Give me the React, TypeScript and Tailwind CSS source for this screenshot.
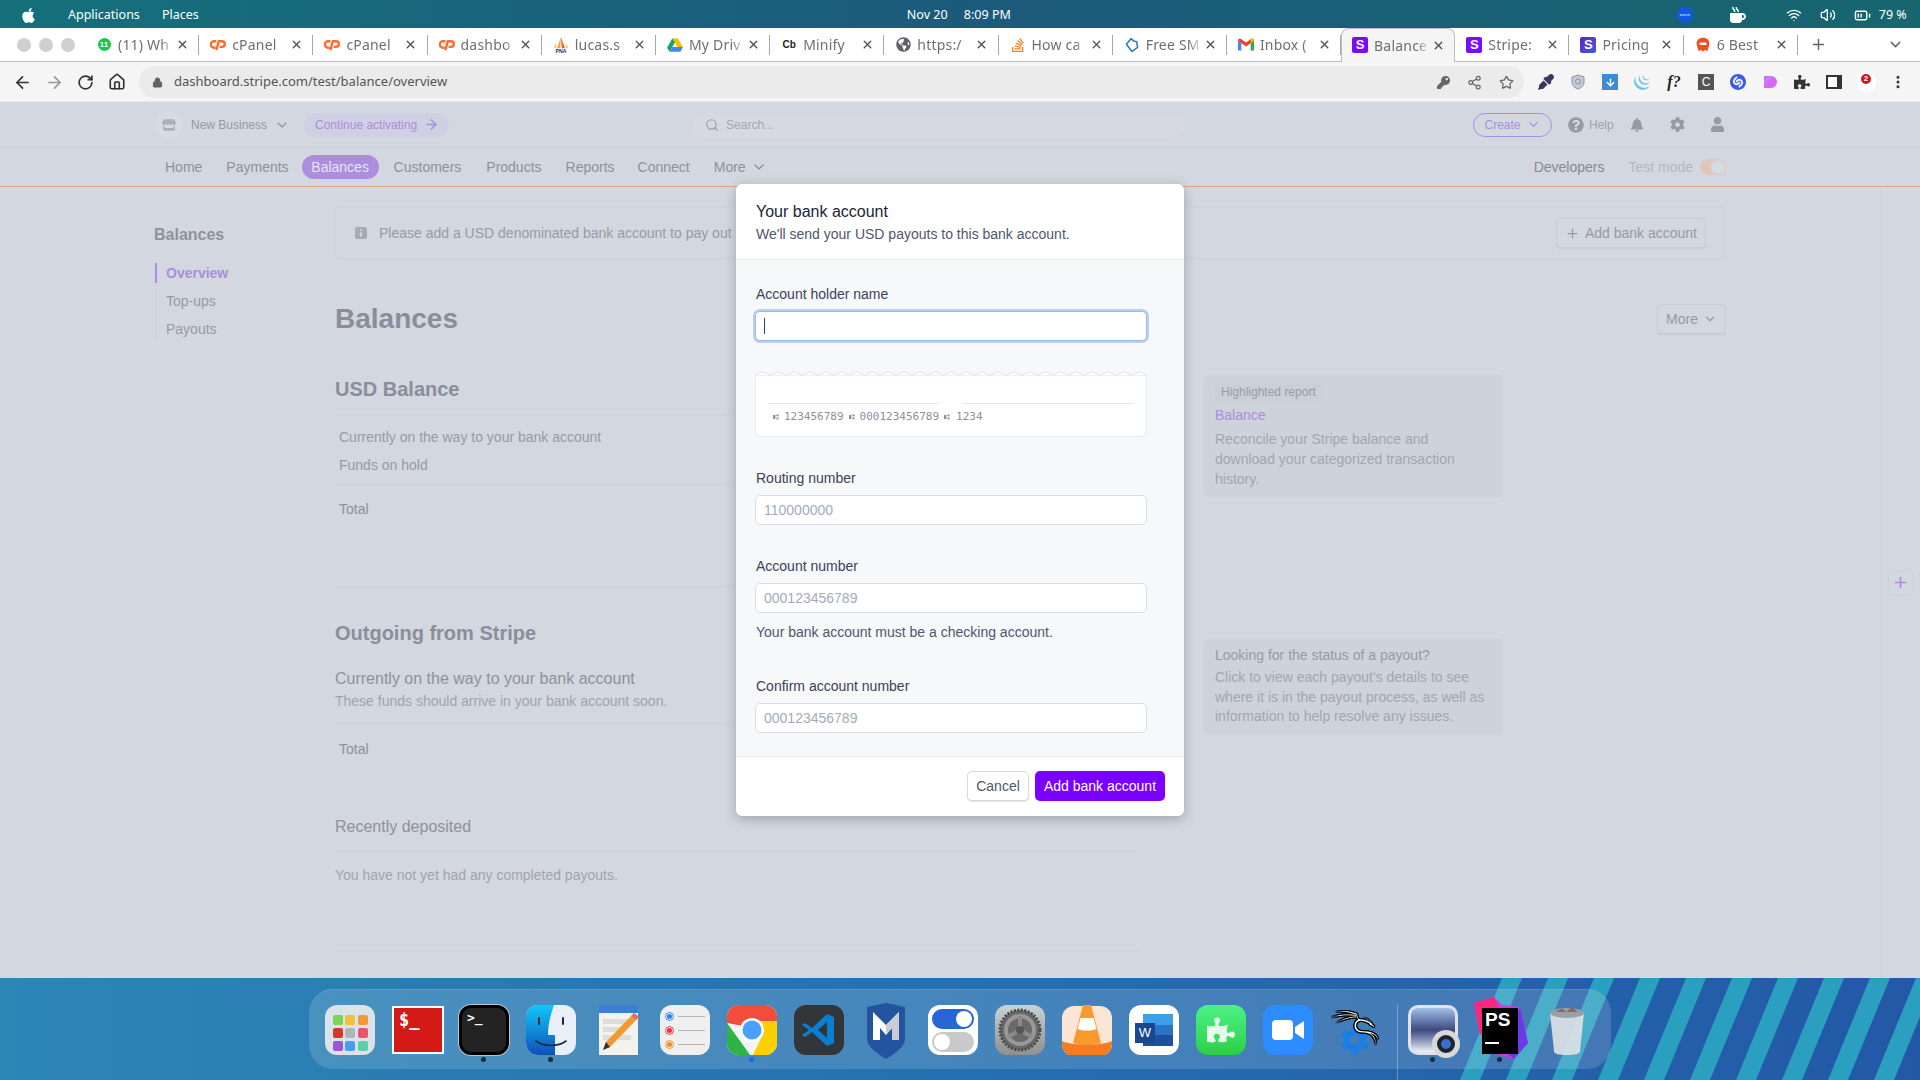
import type { ReactNode } from 'react'
import {
  ArrowLeft,
  ArrowRight,
  BatteryMedium,
  ChevronDown,
  Home,
  Lock,
  MoreVertical,
  Plus,
  RotateCw,
  Search,
  Share2,
  Star,
  Volume2,
  Wifi,
  X,
} from 'lucide-react'
import {
  FaApple,
  FaBell,
  FaCog,
  FaEyeDropper,
  FaGlobeAmericas,
  FaKey,
  FaMugHot,
  FaPuzzlePiece,
  FaQuestionCircle,
  FaStackOverflow,
  FaStore,
  FaUser,
} from 'react-icons/fa'
import { SiJquery, SiKalilinux, SiShazam } from 'react-icons/si'

function StripeFav({ gradient }: { gradient?: boolean }) {
  return (
    <span
      className={`flex h-4 w-4 items-center justify-center rounded-[2px] font-['Liberation_Sans',sans-serif] text-[13px] font-bold text-white ${
        gradient ? 'bg-gradient-to-br from-[#5b1fc4] to-[#3a5be0]' : 'bg-[#7a0bff]'
      }`}
    >
      S
    </span>
  )
}

function CpanelFav() {
  return (
    <svg viewBox="0 0 20 14" className="h-[13px] w-4" fill="none" stroke="#ff6c2c" strokeWidth="3">
      <path d="M8 3H5a4 4 0 0 0 0 8h2" />
      <path d="M8 14 11 3h4a3.5 3.5 0 0 1 0 7h-3" />
    </svg>
  )
}

function DriveFav() {
  return (
    <svg viewBox="0 0 24 22" className="h-4 w-4">
      <path d="M8 1h8l8 13h-8z" fill="#fbbc04" />
      <path d="M8 1 0 15l4 6 8-14z" fill="#1ea362" />
      <path d="M4 21h16l4-7H8z" fill="#4285f4" />
    </svg>
  )
}

function GmailFav() {
  return (
    <svg viewBox="0 0 24 18" className="h-[13px] w-4">
      <path d="M0 3v15h5V7z" fill="#4285f4" />
      <path d="M24 3v15h-5V7z" fill="#34a853" />
      <path d="M0 3c0-3 3-4 5-2l7 5 7-5c2-2 5-1 5 2l-5 4-7 5-7-5z" fill="#ea4335" />
      <path d="M19 1c2-2 5-1 5 2l-5 4z" fill="#fbbc04" />
    </svg>
  )
}

function PnaFav() {
  return (
    <svg viewBox="0 0 20 20" className="h-4 w-4">
      <path d="M10 0 5 14h4z" fill="#f2a33a" />
      <path d="M10 0l1 14h4z" fill="#d9691e" />
      <path d="M4 7 1 14h3z" fill="#f7c55a" />
      <path d="M16 7l3 7h-3z" fill="#f7c55a" />
      <text x="10" y="20" textAnchor="middle" fontSize="6.5" fontWeight="700" fill="#1d2f6f" fontFamily="Liberation Sans">
        PNA
      </text>
    </svg>
  )
}

function BlobFav() {
  return (
    <svg viewBox="0 0 20 20" className="h-4 w-4" fill="none" stroke="#2f7fb8" strokeWidth="2">
      <path d="M9 2 3 9l7 9 7-5-1-7-4-1z" strokeLinejoin="round" />
    </svg>
  )
}

function RocketFav() {
  return (
    <svg viewBox="0 0 20 20" className="h-4 w-4">
      <path d="M10 1c5 0 8 3 8 7 0 2-1 3-1 5l-2 5-2-2-3 2-3-2-2 2-2-5c0-2-1-3-1-5 0-4 3-7 8-7z" fill="#f0501e" />
      <rect x="5.5" y="7" width="9" height="3" rx="1.5" fill="#fff" />
    </svg>
  )
}

const tabs: { title: string; icon: ReactNode; active?: boolean }[] = [
  {
    title: '(11) Wh',
    icon: (
      <span className="flex h-[13px] w-[13px] items-center justify-center rounded-full bg-[#12c94e] font-['Liberation_Sans',sans-serif] text-[8px] font-bold text-white">
        11
      </span>
    ),
  },
  { title: 'cPanel', icon: <CpanelFav /> },
  { title: 'cPanel', icon: <CpanelFav /> },
  { title: 'dashbo', icon: <CpanelFav /> },
  { title: 'lucas.s', icon: <PnaFav /> },
  { title: 'My Driv', icon: <DriveFav /> },
  {
    title: 'Minify',
    icon: <span className="font-['Liberation_Sans',sans-serif] text-[10px] font-bold text-[#222]">Cb</span>,
  },
  { title: 'https:/', icon: <FaGlobeAmericas className="h-[15px] w-[15px] text-[#5f6368]" /> },
  { title: 'How ca', icon: <FaStackOverflow className="h-4 w-4 text-[#f48024]" /> },
  { title: 'Free SM', icon: <BlobFav /> },
  { title: 'Inbox (', icon: <GmailFav /> },
  { title: 'Balance', icon: <StripeFav />, active: true },
  { title: 'Stripe:', icon: <StripeFav /> },
  { title: 'Pricing', icon: <StripeFav gradient /> },
  { title: '6 Best', icon: <RocketFav /> },
]

function TopBar() {
  return (
    <div className="flex h-[28px] shrink-0 items-center bg-gradient-to-r from-[#14707a] via-[#1c5a7c] to-[#17666f] pt-[2px] font-['Noto_Sans',sans-serif] text-[12.5px] text-white">
      <FaApple className="ml-[20px] h-[17px] w-[17px]" />
      <span className="ml-[31px] w-[94px]">Applications</span>
      <span>Places</span>
      <span className="ml-[708px] w-[57px]">Nov 20</span>
      <span>8:09 PM</span>
      <span className="ml-[666px] flex h-4 w-4 items-center justify-center rounded-full bg-[#1257e0] text-[4px]">zoom</span>
      <FaMugHot className="ml-[37px] h-4 w-4" />
      <Wifi className="ml-[40px] h-4 w-4" />
      <Volume2 className="ml-[18px] h-4 w-4" />
      <BatteryMedium className="ml-[18px] h-[17px] w-[17px]" />
      <span className="ml-[8px]">79 %</span>
    </div>
  )
}

function TabStrip() {
  return (
    <div className="flex h-[34px] shrink-0 items-stretch border-b border-[#bdbdbd] bg-white font-['Noto_Sans',sans-serif]">
      <div className="flex w-[85px] shrink-0 items-center gap-[8px] pl-[17px]">
        <span className="h-[14px] w-[14px] rounded-full bg-[#cfcfcf]" />
        <span className="h-[14px] w-[14px] rounded-full bg-[#cfcfcf]" />
        <span className="h-[14px] w-[14px] rounded-full bg-[#cfcfcf]" />
      </div>
      {tabs.map((tab, i) => (
        <div
          key={i}
          className={`relative flex w-[114.2px] shrink-0 items-center ${
            tab.active ? 'z-10 -mb-px rounded-t-[8px] border border-b-0 border-[#bdbdbd] bg-[#f5f5f5] pb-px pl-[10px]' : 'pl-[11px]'
          }`}
        >
          <span className="flex h-4 w-4 shrink-0 items-center justify-center">{tab.icon}</span>
          <span className="ml-[6px] w-[57px] shrink-0 overflow-hidden whitespace-nowrap text-[14px] tracking-[0.2px] text-[#6f6f6f] [mask-image:linear-gradient(to_right,black_75%,transparent)]">
            {tab.title}
          </span>
          <X className="ml-px h-[13px] w-[13px] shrink-0 text-[#555]" strokeWidth={2.5} />
          {!tab.active && <span className="absolute top-[7px] right-0 h-[20px] w-px bg-[#a9a9a9]" />}
        </div>
      ))}
      <Plus className="ml-[12px] h-[17px] w-[17px] self-center text-[#5f6368]" strokeWidth={2} />
      <ChevronDown className="ml-[60px] h-[17px] w-[17px] self-center text-[#666]" strokeWidth={2} />
    </div>
  )
}

function Toolbar() {
  return (
    <div className="flex h-[40px] shrink-0 items-center border-b border-[#e8e9ec] bg-[#f5f5f5] pt-px text-[#333]">
      <ArrowLeft className="ml-[13px] h-[19px] w-[19px]" strokeWidth={2.2} />
      <ArrowRight className="ml-[13px] h-[19px] w-[19px] text-[#999]" strokeWidth={2.2} />
      <RotateCw className="ml-[13px] h-[17px] w-[17px]" strokeWidth={2.4} />
      <Home className="ml-[14px] h-[18px] w-[18px]" strokeWidth={2.2} />
      <div className="ml-[13px] flex h-[32px] w-[1385px] items-center rounded-full bg-[#ebebeb] pr-[10px] pl-[13px]">
        <Lock className="h-[11px] w-[11px] text-[#5f6368]" fill="#5f6368" />
        <span className="ml-[11px] font-['Noto_Sans',sans-serif] text-[13px] text-[#555]">dashboard.stripe.com/test/balance/overview</span>
        <FaKey className="ml-auto h-[13px] w-[13px] text-[#666]" />
        <Share2 className="ml-[17px] h-[15px] w-[15px] text-[#666]" />
        <Star className="ml-[17px] h-[15px] w-[15px] text-[#666]" />
      </div>
      <div className="ml-[14px] flex items-center gap-[16px]">
        <FaEyeDropper className="h-4 w-4 text-[#3d3560]" />
        <svg viewBox="0 0 16 16" className="h-4 w-4">
          <path d="M8 1l6 2v5c0 4-3 6-6 7-3-1-6-3-6-7V3z" fill="#c5cad6" stroke="#8d93a3" />
          <circle cx="8" cy="7.5" r="2.6" fill="none" stroke="#8d93a3" />
        </svg>
        <span className="flex h-4 w-4 items-center justify-center bg-[#3f8ad0]">
          <ArrowLeft className="h-[11px] w-[11px] -rotate-90 text-white" strokeWidth={3} />
        </span>
        <SiJquery className="h-4 w-4 text-[#62c2f2]" />
        <span className="w-4 text-center font-['Liberation_Serif',serif] text-[16px] font-bold text-[#222] italic">f?</span>
        <span className="flex h-4 w-4 items-center justify-center bg-[#555] font-['Liberation_Sans',sans-serif] text-[12px] text-white">C</span>
        <SiShazam className="h-4 w-4 text-[#3a5ce0]" />
        <svg viewBox="0 0 16 16" className="h-4 w-4">
          <path d="M2 14V2h7a6 6 0 0 1 0 12H5z" fill="#d46af0" />
          <path d="M2 7l6-5h3L2 10z" fill="#b58cf4" />
        </svg>
        <FaPuzzlePiece className="h-4 w-4 text-[#333]" />
        <span className="flex h-[14px] w-4 justify-start border-[2.5px] border-[#333] bg-white">
          <span className="ml-auto h-full w-[3px] bg-[#333]" />
        </span>
        <span className="-mx-[2px] flex h-[20px] w-[20px] items-start justify-center rounded-full bg-white pt-[2px]">
          <span className="flex h-[10px] w-[10px] items-center justify-center rounded-full bg-[#d0121b] font-['Liberation_Sans',sans-serif] text-[8px] font-bold text-white">2</span>
        </span>
        <MoreVertical className="h-4 w-4 text-[#333]" strokeWidth={2.6} />
      </div>
    </div>
  )
}

function StripeHeader() {
  return (
    <div className="flex h-[45px] shrink-0 items-center border-b border-[#cdd1da] pt-px font-['Liberation_Sans',sans-serif] text-[12px]">
      <span className="ml-[155px] flex h-[28px] w-[28px] items-center justify-center rounded-full bg-[#d8dbe2]">
        <FaStore className="h-[14px] w-[14px] text-[#aab0bc]" />
      </span>
      <span className="ml-[8px] text-[#969aa7]">New Business</span>
      <ChevronDown className="ml-[7px] h-4 w-4 text-[#969aa7]" />
      <span className="ml-[14px] flex h-[24px] w-[145px] items-center rounded-full bg-[#cfd0e3] pl-[11px] text-[#a98fdc]">
        Continue activating
        <ArrowRight className="ml-[7px] h-[15px] w-[15px]" strokeWidth={2.4} />
      </span>
      <span className="ml-[244px] flex h-[24px] w-[492px] items-center rounded-full bg-[#d6d9e1] pl-[12px] text-[#a3a7b3]">
        <Search className="mr-[7px] h-[14px] w-[14px] text-[#9a9ea9]" />
        Search...
      </span>
      <span className="ml-[288px] flex h-[24px] w-[79px] items-center justify-center rounded-full border border-[#ac90e0] text-[#a98fdc]">
        Create
        <ChevronDown className="ml-[5px] h-[15px] w-[15px]" />
      </span>
      <FaQuestionCircle className="ml-[16px] h-4 w-4 text-[#969aa7]" />
      <span className="ml-[5px] text-[#a0a4b0]">Help</span>
      <FaBell className="ml-[16px] h-[14px] w-[14px] text-[#969aa7]" />
      <FaCog className="ml-[26px] h-[15px] w-[15px] text-[#969aa7]" />
      <FaUser className="ml-[25px] h-[15px] w-[15px] text-[#969aa7]" />
    </div>
  )
}

function StripeNav() {
  return (
    <div className="flex h-[40px] shrink-0 items-center border-b border-[#dfa68a] pt-px font-['Liberation_Sans',sans-serif] text-[14px] text-[#8e929e]">
      <span className="ml-[165px]">Home</span>
      <span className="ml-[24px]">Payments</span>
      <span className="ml-[13px] flex h-[24px] w-[77px] items-center justify-center rounded-full bg-[#ab8edd] text-[#e6e4f2]">Balances</span>
      <span className="ml-[15px]">Customers</span>
      <span className="ml-[25px]">Products</span>
      <span className="ml-[24px]">Reports</span>
      <span className="ml-[23px]">Connect</span>
      <span className="ml-[24px]">More</span>
      <ChevronDown className="ml-[5px] h-4 w-4" />
      <span className="ml-[767px] text-[#868a96]">Developers</span>
      <span className="ml-[24px] text-[#b4b8c3]">Test mode</span>
      <span className="ml-[7px] flex h-4 w-[26px] items-center justify-end rounded-full bg-[#e0c6bc] pr-[1px]">
        <span className="h-[14px] w-[14px] rounded-full bg-[#d6dae2]" />
      </span>
    </div>
  )
}

function Sidebar() {
  return (
    <div className="w-[335px] shrink-0 pt-[38px] pl-[154px] font-['Liberation_Sans',sans-serif] text-[14px]">
      <div className="h-[20px] text-[16px] leading-[20px] font-bold text-[#8e929e]">Balances</div>
      <div className="mt-[18px] ml-px border-l border-[#cdd1da]">
        <div className="-ml-px flex h-[20px] items-center border-l-2 border-[#ab8edd] pl-[9px] font-bold text-[#ab8edd]">Overview</div>
        <div className="mt-[8px] flex h-[20px] items-center pl-[10px] text-[#979ba7]">Top-ups</div>
        <div className="mt-[8px] flex h-[20px] items-center pl-[10px] text-[#979ba7]">Payouts</div>
      </div>
    </div>
  )
}

function OutlineButton({ children }: { children: ReactNode }) {
  return (
    <span className="flex h-[30px] items-center rounded-[4px] border border-[#c7cbd4] bg-[#d3d7df] px-[8px] text-[14px] text-[#959aa6] shadow-[0_1px_1px_rgba(0,0,0,0.06)]">
      {children}
    </span>
  )
}

function SideCard({ className, children }: { className: string; children: ReactNode }) {
  return <div className={`ml-[63px] w-[300px] rounded-[4px] bg-[#ced2db] px-[12px] text-[14px] text-[#a2a6b2] ${className}`}>{children}</div>
}

function BalancesPage() {
  return (
    <div className="w-[1391px] shrink-0 font-['Liberation_Sans',sans-serif]">
      <div className="mt-[19px] flex h-[53px] items-center rounded-[4px] border border-[#cdd1da] pt-px pr-[19px] pl-[19px] text-[14px] text-[#979ba7]">
        <svg viewBox="0 0 12 12" className="h-[12px] w-[12px]">
          <rect width="12" height="12" rx="2" fill="#a7abb6" />
          <path d="M5 2.5h2v1.6H5zM5 5.4h2v4.2H5z" fill="#d3d7df" />
        </svg>
        <span className="ml-[12px]">Please add a USD denominated bank account to pay out</span>
        <span className="ml-auto">
          <OutlineButton>
            <Plus className="mr-[5px] h-[15px] w-[15px]" />
            Add bank account
          </OutlineButton>
        </span>
      </div>

      <div className="mt-[45px] flex h-[30px] items-center justify-between">
        <h1 className="text-[28px] leading-[30px] font-bold text-[#8a8e9c]">Balances</h1>
        <OutlineButton>
          More
          <ChevronDown className="ml-[5px] h-[14px] w-[14px]" />
        </OutlineButton>
      </div>

      <div className="mt-[43px] flex items-start">
        <div className="w-[805px]">
          <div className="border-b border-[#cdd1da] pb-[13px] text-[20px] leading-[24px] font-bold text-[#8a8e9c]">USD Balance</div>
          <div className="border-b border-[#cdd1da] pt-[8px] pb-[5px] pl-[4px] text-[14px] text-[#979ba7]">
            <div className="flex h-[28px] items-center">Currently on the way to your bank account</div>
            <div className="flex h-[28px] items-center">Funds on hold</div>
          </div>
          <div className="flex h-[102px] border-b border-[#cdd1da] pt-[14px] pl-[4px] text-[14px] leading-[20px] text-[#8e929e]">Total</div>
        </div>
        <SideCard className="-mt-[2px] h-[122px] pt-[9px]">
          <div className="h-[17px] w-fit rounded-[3px] bg-[#cbcfd8] px-[6px] text-[12px] leading-[17px] text-[#979ba7]">Highlighted report</div>
          <div className="mt-[4px] leading-[20px] text-[#ab8edd]">Balance</div>
          <p className="mt-[4px] leading-[20px]">
            Reconcile your Stripe balance and
            <br />
            download your categorized transaction
            <br />
            history.
          </p>
        </SideCard>
      </div>

      <div className="mt-[34px] flex items-start">
        <div className="w-[805px]">
          <div className="text-[20px] leading-[24px] font-bold text-[#8a8e9c]">Outgoing from Stripe</div>
          <div className="mt-[23px] text-[16px] leading-[22px] text-[#8e929e]">Currently on the way to your bank account</div>
          <div className="mt-[1px] border-b border-[#cdd1da] pb-[12px] text-[14px] leading-[20px] text-[#a0a4b0]">These funds should arrive in your bank account soon.</div>
          <div className="flex h-[50px] items-center pl-[4px] text-[14px] text-[#8e929e]">Total</div>
        </div>
        <SideCard className="mt-[18px] h-[96px] pt-[6px]">
          <div className="leading-[20px] text-[#979ba7]">Looking for the status of a payout?</div>
          <p className="mt-[3px] leading-[19.5px]">
            Click to view each payout's details to see
            <br />
            where it is in the payout process, as well as
            <br />
            information to help resolve any issues.
          </p>
        </SideCard>
      </div>

      <div className="mt-[42px] w-[805px]">
        <div className="border-b border-[#cdd1da] pb-[12px] text-[16px] leading-[22px] text-[#8e929e]">Recently deposited</div>
        <div className="mt-[14px] border-b border-[#cdd1da] pb-[65px] text-[14px] leading-[20px] text-[#a0a4b0]">You have not yet had any completed payouts.</div>
      </div>
    </div>
  )
}

function MicrMark() {
  return (
    <svg viewBox="0 0 6 6" className="h-[6px] w-[6px] text-[#8b90a0]" fill="currentColor">
      <rect x="0" y="1" width="2.4" height="4" />
      <rect x="3.4" y="0.5" width="2.2" height="1.8" />
      <rect x="3.4" y="3.6" width="2.2" height="1.8" />
    </svg>
  )
}

function ChequeSample() {
  const waves = Array.from({ length: 25 }, (_, i) => `L${i * 15.68 + 7.84} 0.5 L${i * 15.68 + 15.68} 4.5`).join(' ')
  return (
    <div className="mt-[30px] h-[66px] w-[392px]">
      <svg viewBox="0 0 392 5" className="block h-[5px] w-[392px]">
        <path d={`M0 4.5 ${waves} L392 5 L0 5 Z`} fill="#fff" stroke="#dfe2e8" strokeWidth="1" />
      </svg>
      <div className="h-[61px] rounded-b-[6px] border border-t-0 border-[#e8ebf0] bg-white px-[12px] pt-[27px]">
        <div className="flex gap-[24px]">
          <span className="h-px w-[171px] bg-[#e3e6ec]" />
          <span className="h-px w-[171px] bg-[#e3e6ec]" />
        </div>
        <div className="mt-[6px] flex items-center pl-[5px] font-['DejaVu_Sans_Mono',monospace] text-[11px] leading-[14px] text-[#8b90a0]">
          <MicrMark />
          <span className="ml-[5px]">123456789</span>
          <span className="ml-[5px]"><MicrMark /></span>
          <span className="ml-[5px]">000123456789</span>
          <span className="ml-[5px]"><MicrMark /></span>
          <span className="ml-[6px]">1234</span>
        </div>
      </div>
    </div>
  )
}

function Field({ label, placeholder, className }: { label: string; placeholder: string; className: string }) {
  return (
    <div className={className}>
      <div className="pl-px text-[14px] leading-[20px] text-[#3c4257]">{label}</div>
      <input
        readOnly
        placeholder={placeholder}
        className="mt-[7px] block h-[30px] w-[392px] rounded-[5px] border border-[#d9dde4] bg-white px-[8px] text-[14px] outline-none placeholder:text-[#a3acb9]"
      />
    </div>
  )
}

function BankModal() {
  return (
    <div className="absolute top-[82px] left-[736px] z-20 w-[448px] overflow-hidden rounded-[6px] bg-white font-['Liberation_Sans',sans-serif] shadow-[0_3px_12px_rgba(60,66,87,0.35)]">
      <div className="h-[76px] border-b border-[#e3e8ee] px-[20px] pt-[16px]">
        <div className="text-[16px] leading-[24px] text-[#1a1f36]">Your bank account</div>
        <div className="text-[14px] leading-[20px] text-[#4f566b]">We'll send your USD payouts to this bank account.</div>
      </div>
      <div className="bg-[#f7f8fa] pt-[24px] pb-[23px] pl-[19px]">
        <div className="pl-px text-[14px] leading-[20px] text-[#3c4257]">Account holder name</div>
        <div className="mt-[7px] flex h-[30px] w-[392px] items-center rounded-[5px] border border-[#9dbbea] bg-white pl-[8px] shadow-[0_0_0_2px_#b9cff0]">
          <span className="h-[16px] w-px bg-[#3c4257]" />
        </div>
        <ChequeSample />
        <Field label="Routing number" placeholder="110000000" className="mt-[31px]" />
        <Field label="Account number" placeholder="000123456789" className="mt-[31px]" />
        <div className="mt-[9px] pl-px text-[14px] leading-[20px] text-[#4f566b]">Your bank account must be a checking account.</div>
        <Field label="Confirm account number" placeholder="000123456789" className="mt-[34px]" />
      </div>
      <div className="flex h-[60px] items-center justify-end gap-[6px] border-t border-[#e3e8ee] pr-[19px] pb-[1px] text-[14px]">
        <span className="flex h-[30px] w-[62px] items-center justify-center rounded-[5px] border border-[#d5d9e0] bg-white text-[#4f566b] shadow-[0_1px_1px_rgba(0,0,0,0.12)]">Cancel</span>
        <span className="flex h-[30px] w-[130px] items-center justify-center rounded-[5px] bg-[#7a00ff] text-white">Add bank account</span>
      </div>
    </div>
  )
}

function DockIcon({ children, dot }: { children: ReactNode; dot?: string }) {
  return (
    <div className="relative h-[50px] w-[50px] shrink-0">
      {children}
      {dot && <span className={`absolute -bottom-[7px] left-[22px] h-[5px] w-[5px] rounded-full ${dot}`} />}
    </div>
  )
}

function Launchpad() {
  const colors = ['#7cd35a', '#f3c03c', '#ef9b3c', '#d0392b', '#aeb4ba', '#e8566e', '#9a55d0', '#4a9cf0', '#5ccfa8']
  return (
    <div className="grid h-full w-full grid-cols-3 gap-[3px] rounded-[12px] bg-[#dbe3ea] p-[8px] pt-[10px]">
      {colors.map((c) => (
        <svg key={c} viewBox="0 0 10 10" className="h-[10px] w-[10px]">
          <rect width="10" height="10" rx="2" fill={c} />
        </svg>
      ))}
    </div>
  )
}

function Reminders() {
  const dots = ['#2f7ff0', '#f0303a', '#f58a1f']
  return (
    <div className="flex h-full w-full flex-col justify-center gap-[5px] rounded-[12px] bg-[#f0eff0] pl-[5px]">
      {dots.map((c) => (
        <div key={c} className="flex items-center gap-[4px]">
          <svg viewBox="0 0 10 10" className="h-[9px] w-[9px]">
            <circle cx="5" cy="5" r="4.4" fill="none" stroke={c} />
            <circle cx="5" cy="5" r="2.8" fill={c} />
          </svg>
          <span className="h-px w-[27px] bg-[#b5b5b5]" />
        </div>
      ))}
    </div>
  )
}

function DockIcons() {
  return (
    <>
      <DockIcon><Launchpad /></DockIcon>
      <DockIcon>
        <div className="mt-[1px] h-[48px] w-[52px] border-2 border-white bg-[#d31a17] pt-[2px] pl-[5px] font-['DejaVu_Sans_Mono',monospace] text-[17px] leading-[20px] font-bold text-white">$_</div>
      </DockIcon>
      <DockIcon dot="bg-[#142c44]">
        <div className="h-full w-full rounded-[12px] border-[3px] border-black bg-[#232323] pl-[5px] font-['DejaVu_Sans_Mono',monospace] text-[13px] font-bold text-white shadow-[0_0_0_1px_#b9c4cc]">&gt;_</div>
      </DockIcon>
      <DockIcon dot="bg-[#142c44]">
        <svg viewBox="0 0 50 50" className="h-full w-full">
          <defs>
            <linearGradient id="finder" x1="0" y1="0" x2="0" y2="1">
              <stop offset="0" stopColor="#10c8fb" />
              <stop offset="1" stopColor="#0f50b8" />
            </linearGradient>
          </defs>
          <rect width="50" height="50" rx="12" fill="#e9eef8" />
          <path d="M12 0h16c-4 12-6 20-6 30h7v20H12A12 12 0 0 1 0 38V12A12 12 0 0 1 12 0z" fill="url(#finder)" />
          <path d="M13 13v6M37 13v6" stroke="#1c2a3a" strokeWidth="2" strokeLinecap="round" />
          <path d="M10 36c8 6 22 6 30 0" stroke="#1c2a3a" strokeWidth="1.6" fill="none" strokeLinecap="round" />
        </svg>
      </DockIcon>
      <DockIcon>
        <svg viewBox="0 0 50 50" className="h-full w-full">
          <rect x="6" width="39" height="50" fill="#f2f2ee" />
          <rect x="6" width="39" height="8" fill="#3b7fd4" />
          <path d="M10 14h28v5H10zM10 22h22v5H10zM10 30h28v5H10z" fill="#dcdcd8" />
          <path d="M41 8l5 4-29 30-7 3 3-8z" fill="#f29a30" />
          <path d="M41 8l5 4-3 3-5-4z" fill="#e86a6a" />
          <path d="M13 37l4 5-7 3z" fill="#333" />
        </svg>
      </DockIcon>
      <DockIcon><Reminders /></DockIcon>
      <DockIcon dot="bg-[#1668f0]">
        <svg viewBox="0 0 50 50" className="h-full w-full">
          <rect width="50" height="50" rx="12" fill="#f4f4f4" />
          <path d="M12 0h26a12 12 0 0 1 12 12v4H25A10 10 0 0 0 16 21L0 18v-6A12 12 0 0 1 12 0z" fill="#f24c3a" />
          <path d="M0 18l16 22 7 10H12A12 12 0 0 1 0 38z" fill="#2fb344" />
          <path d="M27 16h23v22a12 12 0 0 1-12 12H26l10-21z" fill="#fbd000" />
          <circle cx="25" cy="25" r="12" fill="#fff" />
          <circle cx="25" cy="25" r="9.5" fill="#4aa0ff" />
        </svg>
      </DockIcon>
      <DockIcon>
        <svg viewBox="0 0 50 50" className="h-full w-full">
          <rect width="50" height="50" rx="12" fill="#333638" />
          <path d="M33 9l7 3v26l-7 3-15-14-7 5-3-2 7-5-7-5 3-2 7 5z" fill="#0a7fd0" />
          <path d="M33 17l-9 8 9 8z" fill="#333638" />
        </svg>
      </DockIcon>
      <DockIcon>
        <svg viewBox="0 0 50 56" className="h-[56px] w-full -translate-y-[2px]">
          <path d="M25 0l19 4v32c0 8-11 15-19 20C17 51 6 44 6 36V4z" fill="#23549f" />
          <path d="M12 9l13 13 13-13v28h-7V25l-6 7-6-7v12h-7z" fill="#fff" />
          <path d="M25 22l13-13v28h-7V25l-6 7z" fill="#c9ccd2" />
        </svg>
      </DockIcon>
      <DockIcon>
        <div className="flex h-full w-full flex-col justify-center gap-[3px] rounded-[12px] bg-white px-[4px]">
          <div className="flex h-[20px] items-center justify-end rounded-full bg-[#2866d6] pr-[2px]"><span className="h-[16px] w-[16px] rounded-full bg-white" /></div>
          <div className="flex h-[20px] items-center rounded-full bg-[#c9c9c9] pl-[2px]"><span className="h-[16px] w-[16px] rounded-full bg-white" /></div>
        </div>
      </DockIcon>
      <DockIcon>
        <svg viewBox="0 0 50 50" className="h-full w-full rounded-[12px] bg-gradient-to-b from-[#c7d3d6] to-[#8f8f8f]">
          <circle cx="25" cy="25" r="20" fill="#6a6a6a" stroke="#4a4a4a" strokeWidth="3" strokeDasharray="2 1.5" />
          <circle cx="25" cy="25" r="14" fill="none" stroke="#999" strokeWidth="4" />
          <path d="M25 25V11M25 25l12 7M25 25l-12 7" stroke="#8a8a8a" strokeWidth="4" />
          <circle cx="25" cy="25" r="4" fill="#555" />
        </svg>
      </DockIcon>
      <DockIcon>
        <svg viewBox="0 0 50 50" className="h-full w-full">
          <rect width="50" height="50" y="1" rx="12" fill="#fbe6d6" />
          <path d="M0 36c10 5 40 5 50 0v3a12 12 0 0 1-12 12H12A12 12 0 0 1 0 39z" fill="#f57a20" />
          <path d="M21 0h8l10 38c-8 3-20 3-28 0z" fill="#f89a2d" />
          <path d="M18.5 13h13l3 11c-6 2-13 2-19 0z" fill="#fff" />
        </svg>
      </DockIcon>
      <DockIcon>
        <div className="relative h-full w-full rounded-[12px] bg-white">
          <div className="absolute top-[9px] left-[14px] flex h-[32px] w-[30px] flex-col">
            <span className="h-1/3 bg-[#3ba0e6]" />
            <span className="h-1/3 bg-[#2a74c8]" />
            <span className="h-1/3 bg-[#1c4fa0]" />
          </div>
          <span className="absolute top-[18px] left-[6px] flex h-[20px] w-[20px] items-center justify-center bg-[#1b478f] font-['Liberation_Sans',sans-serif] text-[13px] text-white">W</span>
        </div>
      </DockIcon>
      <DockIcon>
        <div className="flex h-full w-full items-center justify-center rounded-[12px] bg-gradient-to-b from-[#4cf286] to-[#2bcf45]">
          <FaPuzzlePiece className="h-[28px] w-[28px] text-[#e4fbe9]" />
        </div>
      </DockIcon>
      <DockIcon>
        <div className="flex h-full w-full items-center justify-center rounded-[12px] bg-[#2d8cff]">
          <svg viewBox="0 0 32 20" className="h-[22px] w-[32px]">
            <rect width="21" height="20" rx="4" fill="#fff" />
            <path d="M23 7l9-6v18l-9-6z" fill="#fff" />
          </svg>
        </div>
      </DockIcon>
      <DockIcon>
        <div className="relative h-full w-full">
          <FaCog className="absolute top-[20px] left-[10px] h-[30px] w-[30px] text-[#1c7fe0]" />
          <SiKalilinux className="absolute inset-0 h-[46px] w-[50px] text-white [filter:drop-shadow(1px_0_0_#000)_drop-shadow(-1px_0_0_#000)_drop-shadow(0_1px_0_#000)_drop-shadow(0_-1px_0_#000)]" />
        </div>
      </DockIcon>
      <span className="mr-[-7px] h-[76px] w-px bg-white/30" />
      <DockIcon dot="bg-[#142c44]">
        <div className="relative h-full w-full rounded-[10px] border-[3px] border-[#dfe3e8] bg-gradient-to-b from-[#a3c0ea] via-[#3e4a80] to-[#eef3f8]">
          <span className="absolute -right-[5px] -bottom-[6px] flex h-[28px] w-[28px] items-center justify-center rounded-full bg-[#d8d8d8]">
            <span className="h-[18px] w-[18px] rounded-full border-[4px] border-[#1b2430] bg-[#3a6fd0]" />
          </span>
        </div>
      </DockIcon>
      <DockIcon dot="bg-[#142c44]">
        <div className="relative h-full w-full">
          <svg viewBox="0 0 56 64" className="absolute -top-[8px] -left-[3px] h-[64px] w-[56px]">
            <path d="M2 6l20-6 8 8 18 2 8 36-14 16-22-6L6 30z" fill="#d23ad6" />
            <path d="M2 6l20-6 6 16-20 22z" fill="#f9287c" />
            <path d="M48 10l8 36-14 16-12-10z" fill="#6a3ae8" />
          </svg>
          <div className="absolute top-[3px] left-[7px] h-[46px] w-[36px] bg-black pt-[2px] pl-[3px] font-['Liberation_Sans',sans-serif] text-[19px] leading-[20px] font-bold text-white">
            PS
            <span className="mt-[12px] block h-[2px] w-[14px] bg-white" />
          </div>
        </div>
      </DockIcon>
      <DockIcon>
        <svg viewBox="0 0 50 50" className="h-full w-full">
          <path d="M8 8h34l-4 38c0 3-5 4-13 4s-13-1-13-4z" fill="#dfe3e6" fillOpacity="0.9" />
          <ellipse cx="25" cy="8" rx="17" ry="5" fill="#9aa0a5" />
          <path d="M14 7l6-4 4 4 6-5 6 5z" fill="#7a6f6a" />
        </svg>
      </DockIcon>
    </>
  )
}

function Dock() {
  return (
    <div className="relative h-[102px] shrink-0 overflow-hidden bg-gradient-to-r from-[#2c86b6] via-[#2570b0] to-[#2358a6]">
      <svg viewBox="0 0 460 102" className="absolute top-0 right-0 h-[102px] w-[460px]">
        {[0, 1, 2, 3, 4, 5, 6, 7, 8, 9].map((i) => (
          <path key={i} d={`M${i * 46 + 42} 0 h20 l-42 102 h-20 z`} fill="#2b9fc0" />
        ))}
      </svg>
      <div className="relative mt-[11px] ml-[309px] flex h-[80px] w-[1302px] items-start gap-[17px] rounded-[24px] border-t border-white/10 bg-white/15 pt-[15px] pl-[16px]">
        <DockIcons />
      </div>
    </div>
  )
}

export default function App() {
  return (
    <div className="flex h-[1080px] w-[1920px] flex-col overflow-hidden">
      <TopBar />
      <TabStrip />
      <Toolbar />
      <div className="relative flex min-h-0 flex-1 flex-col bg-[#d3d7df]">
        <StripeHeader />
        <StripeNav />
        <div className="flex min-h-0 flex-1">
          <Sidebar />
          <BalancesPage />
          <div className="ml-auto flex w-[40px] justify-center border-l border-[#cdd1da] pt-[383px]">
            <span className="flex h-[25px] w-[25px] items-center justify-center rounded-[5px] border border-[#cdd1da]">
              <Plus className="h-[17px] w-[17px] text-[#ab8edd]" strokeWidth={2.4} />
            </span>
          </div>
        </div>
        <BankModal />
      </div>
      <Dock />
    </div>
  )
}
